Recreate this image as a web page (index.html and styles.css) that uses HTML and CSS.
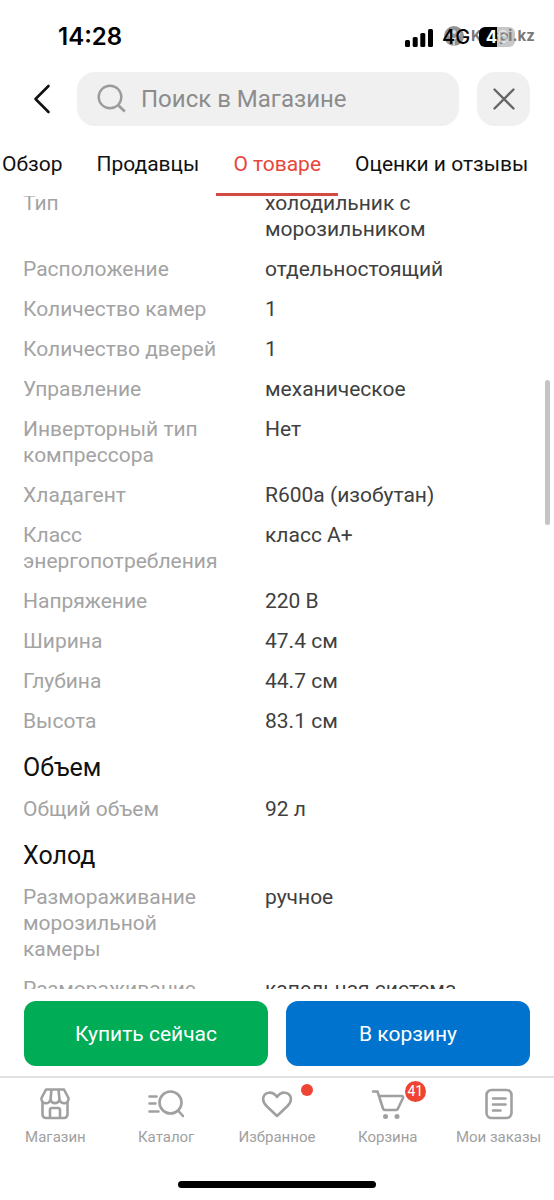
FILE: index.html
```html
<!DOCTYPE html>
<html lang="ru">
<head>
<meta charset="utf-8">
<meta name="viewport" content="width=device-width, initial-scale=1">
<title>О товаре</title>
<link rel="stylesheet" href="styles.css">
</head>
<body>
<div class="app">
  <div class="status">
    <span class="clock">14:28</span>
    <div class="status-right">
      <svg class="signal" width="28" height="19" viewBox="0 0 28 19" aria-hidden="true"><rect x="0" y="12" width="5" height="7" rx="1.5"/><rect x="7.700" y="9" width="5" height="10" rx="1.500"/><rect x="15.300" y="5" width="5" height="14" rx="1.500"/><rect x="23" y="1" width="5" height="18" rx="1.500"/></svg>
      <span class="network">4G</span>
      <span class="battery">4<span class="faint">6</span></span>
      <div class="brand">
        <svg width="20" height="20" viewBox="0 0 20 20" aria-hidden="true"><circle cx="10" cy="10" r="10" fill="#808080"/><path d="M10 20V13C6 12 5 9 4.500 6M10 13c3-1 5-3 6-6" fill="none" stroke="#d8d8d8" stroke-width="1.500"/><circle cx="10" cy="6" r="2" fill="#d8d8d8"/></svg>
        <span>Kaspi.kz</span>
      </div>
    </div>
  </div>

  <header class="topbar">
    <button class="back" aria-label="Назад"><svg width="18" height="30" viewBox="0 0 18 30"><path d="M15.500 2 2.500 15l13 13" fill="none" stroke="#111" stroke-width="2.600" stroke-linecap="round" stroke-linejoin="round"/></svg></button>
    <label class="search">
      <svg width="30" height="30" viewBox="0 0 30 30" aria-hidden="true"><circle cx="13" cy="13" r="11.300" fill="none" stroke="#9b9b9b" stroke-width="2.400"/><path d="m21.500 21.500 6.300 6" stroke="#9b9b9b" stroke-width="2.800"/></svg>
      <input type="search" placeholder="Поиск в Магазине" aria-label="Поиск в Магазине">
    </label>
    <button class="close" aria-label="Закрыть"><svg width="22" height="22" viewBox="0 0 22 22"><path d="m1.500 1.500 19 19m0-19-19 19" stroke="#666" stroke-width="2.400" stroke-linecap="round"/></svg></button>
  </header>

  <nav class="tabs">
    <a href="#overview">Обзор</a>
    <a href="#sellers">Продавцы</a>
    <a href="#about" class="active" aria-current="page">О товаре</a>
    <a href="#reviews">Оценки и отзывы</a>
  </nav>

  <main class="content">
    <div class="specs">
      <dl>
        <dt>Тип</dt><dd>холодильник с морозильником</dd>
        <dt>Расположение</dt><dd>отдельностоящий</dd>
        <dt>Количество камер</dt><dd>1</dd>
        <dt>Количество дверей</dt><dd>1</dd>
        <dt>Управление</dt><dd>механическое</dd>
        <dt>Инверторный тип компрессора</dt><dd>Нет</dd>
        <dt>Хладагент</dt><dd>R600a (изобутан)</dd>
        <dt>Класс энергопотребления</dt><dd>класс A+</dd>
        <dt>Напряжение</dt><dd>220 В</dd>
        <dt>Ширина</dt><dd>47.4 см</dd>
        <dt>Глубина</dt><dd>44.7 см</dd>
        <dt>Высота</dt><dd>83.1 см</dd>
      </dl>
      <h2>Объем</h2>
      <dl>
        <dt>Общий объем</dt><dd>92 л</dd>
      </dl>
      <h2>Холод</h2>
      <dl>
        <dt>Размораживание морозильной камеры</dt><dd>ручное</dd>
        <dt>Размораживание</dt><dd>капельная система</dd>
      </dl>
    </div>
    <span class="thumb"></span>
  </main>

  <div class="actions">
    <button class="buy">Купить сейчас</button>
    <button class="cart">В корзину</button>
  </div>

  <nav class="bottom">
    <a href="#shop">
      <svg width="32" height="32" viewBox="0 0 32 32" aria-hidden="true"><path d="M7 1.500h18l4.500 8.500a4.500 4.500 0 0 1-9 1.500 4.600 4.600 0 0 1-9 0 4.500 4.500 0 0 1-9-1.500zM12.500 1.500l-1 10M19.500 1.500l1 10M3.500 14v12.500a3.500 3.500 0 0 0 3.500 3.500h18a3.500 3.500 0 0 0 3.500-3.500V14M11 30v-8a2 2 0 0 1 2-2h6a2 2 0 0 1 2 2v8"/></svg>
      <span>Магазин</span>
    </a>
    <a href="#catalog">
      <svg width="36" height="32" viewBox="0 0 36 32" aria-hidden="true"><circle cx="22.500" cy="14.500" r="11"/><path d="m30 22.500 5 5.500M1.500 8.500h7M1.500 15.500h6M1.500 23.500h9"/></svg>
      <span>Каталог</span>
    </a>
    <a href="#favorites">
      <svg width="32" height="32" viewBox="0 0 32 32" aria-hidden="true"><path d="M16 28 5.500 18C2.500 15 1.500 12 2.500 9c1.500-5 9-6.500 13.500 0 4.500-6.500 12-5 13.500 0 1 3 0 6-3 9z"/></svg>
      <i class="dot"></i>
      <span>Избранное</span>
    </a>
    <a href="#cart">
      <svg width="34" height="32" viewBox="0 0 34 32" aria-hidden="true"><path d="M2 3.500h4.500L12 20.500q.5 1.500 2 1.500h11q1.500 0 2-1.500L32 10q.5-2-1.500-2H8.500"/><circle class="solid" cx="14.500" cy="28.500" r="2.500"/><circle class="solid" cx="26" cy="28.500" r="2.500"/></svg>
      <b class="badge">41</b>
      <span>Корзина</span>
    </a>
    <a href="#orders">
      <svg width="32" height="32" viewBox="0 0 32 32" aria-hidden="true"><rect x="3.500" y="2" width="25" height="28" rx="5"/><path d="M10 10.500h12.500M10 16.500h12.500M10 22.500h7.500"/></svg>
      <span>Мои заказы</span>
    </a>
  </nav>
  <div class="home"></div>
</div>
</body>
</html>
```
FILE: styles.css
```css
* { box-sizing: border-box; }
body {
  margin: 0;
  background: #fff;
  color: #111;
  font-family: Roboto, "Noto Sans", sans-serif;
}
button { border: 0; padding: 0; font: inherit; cursor: pointer; }
a { color: inherit; text-decoration: none; }
svg { display: block; }

.app { display: flex; flex-direction: column; height: 100vh; overflow: hidden; }

.status {
  display: flex;
  align-items: center;
  justify-content: space-between;
  height: 72px;
  flex: none;
  padding: 2px 20px 0 58px;
}
.clock { font: 600 24px/32px Inter, sans-serif; color: #000; }
.status-right { position: relative; display: flex; align-items: center; width: 129px; }
.signal { fill: #000; }
.network { z-index: 1; margin-left: 9px; font: 500 20px/24px Inter, sans-serif; color: #000; }
.battery {
  z-index: 1;
  margin-left: 9px;
  width: 36px;
  height: 20px;
  border-radius: 6px;
  background: linear-gradient(90deg, #000 50%, rgba(130, 130, 130, 0.45) 50%);
  color: #fff;
  font: 700 17px/20px Inter, sans-serif;
  text-align: center;
}
.faint { opacity: 0.5; }
.brand {
  position: absolute;
  left: 39px;
  top: 0;
  display: flex;
  align-items: center;
  gap: 7px;
  color: #606060;
  font: 700 15px/22px Inter, sans-serif;
  opacity: 0.85;
}

.topbar { display: flex; align-items: center; flex: none; padding: 0 24px; gap: 18px; }
.back { display: flex; justify-content: center; width: 35px; background: none; }
.search {
  display: flex;
  align-items: center;
  gap: 14px;
  flex: 1;
  min-width: 0;
  height: 54px;
  padding: 0 20px;
  border-radius: 18px;
  background: #f0f0f0;
}
.search svg { flex: none; }
.search input {
  flex: 1;
  min-width: 0;
  border: 0;
  padding: 0;
  outline: 0;
  background: none;
  color: #111;
  font: 24px/30px Roboto, sans-serif;
}
.search input::placeholder { color: #8c8c8c; opacity: 1; }
.close {
  display: grid;
  place-items: center;
  width: 53px;
  height: 54px;
  border-radius: 18px;
  background: #f0f0f0;
}

.tabs { display: flex; flex: none; margin: 6px 0 0 -15px; font-size: 21px; line-height: 28px; }
.tabs a { flex: none; padding: 18px 17px 15px; white-space: nowrap; border-bottom: 3px solid transparent; }
.tabs .active { color: #e8463c; border-color: #d24a43; }

.content { position: relative; flex: 1; min-height: 0; overflow: hidden; }
.specs { margin-top: -6px; padding: 0 23px; }
dl {
  display: grid;
  grid-template-columns: 200px 1fr;
  gap: 14px 42px;
  margin: 0;
  font-size: 21px;
  line-height: 26px;
}
dt { color: #a3a3a3; }
dd { margin: 0; max-width: 200px; color: #404040; }
h2 { margin: 18px 0 12px; font-size: 25px; line-height: 32px; font-weight: 400; }
.thumb {
  position: absolute;
  right: 4px;
  top: 184px;
  width: 5px;
  height: 145px;
  border-radius: 3px;
  background: #c4c4c4;
}

.actions { display: flex; flex: none; gap: 18px; padding: 12px 24px 10px; }
.actions button { flex: 1; height: 65px; border-radius: 12px; color: #fff; font-size: 21px; }
.actions .buy { background: #00ac56; }
.actions .cart { background: #0073ce; }

.bottom { display: flex; flex: none; border-top: 2px solid #e2e2e2; padding-top: 10px; color: #a0a0a0; }
.bottom a {
  position: relative;
  display: flex;
  flex: 1;
  flex-direction: column;
  align-items: center;
  gap: 7px;
  font-size: 15px;
  line-height: 20px;
  white-space: nowrap;
}
.bottom svg { fill: none; stroke: #a0a0a0; stroke-width: 2.6; stroke-linecap: round; stroke-linejoin: round; }
.bottom .solid { fill: #a0a0a0; stroke: none; }
.dot { position: absolute; left: calc(50% + 24px); top: -4px; width: 12px; height: 12px; border-radius: 50%; background: #ef4434; }
.badge {
  position: absolute;
  left: calc(50% + 17px);
  top: -7px;
  width: 21px;
  height: 21px;
  border-radius: 50%;
  background: #ef4434;
  color: #fff;
  font-size: 14px;
  font-weight: 400;
  line-height: 21px;
  text-align: center;
}
.home { flex: none; align-self: center; width: 198px; height: 7px; margin: 34px 0 12px; border-radius: 4px; background: #000; }
```
